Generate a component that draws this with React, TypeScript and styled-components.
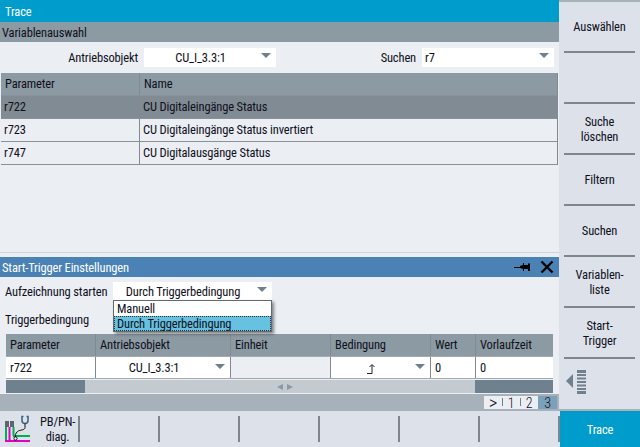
import styled, { createGlobalStyle } from 'styled-components';

const Global = createGlobalStyle`
  html, body { margin: 0; padding: 0; background: #ebeef3; }
  * { box-sizing: border-box; }
`;

const softkeysRight = ['Auswählen', '', 'Suche\nlöschen', 'Filtern', 'Suchen', 'Variablen-\nliste', 'Start-\nTrigger'];
const softkeysBottom = ['PB/PN-\ndiag.', '', '', '', '', '', ''];
const params = [
  { id: 'r722', name: 'CU Digitaleingänge Status', selected: true },
  { id: 'r723', name: 'CU Digitaleingänge Status invertiert', selected: false },
  { id: 'r747', name: 'CU Digitalausgänge Status', selected: false },
];

function DiagIcon() {
  return (
    <svg width='27' height='28' viewBox='0 0 27 28' fill='none' style={{ flex: 'none' }}>
      <rect x='1' y='6' width='4' height='6' fill='#5c666c' />
      <rect x='6' y='6' width='4' height='6' fill='#5c666c' />
      <path d='M2 12v14M9.500 12v9' stroke='#00b050' strokeWidth='2' />
      <path d='M5.500 12v14' stroke='#e000c8' strokeWidth='2' />
      <path d='M9 21h17' stroke='#00b050' strokeWidth='2' />
      <path d='M1 26h25' stroke='#e000c8' strokeWidth='2' />
      <path d='M19.500 1.500H18v4a3 3 0 0 0 6 0v-4h-1.500' stroke='#3f6484' strokeWidth='1.600' />
      <path d='M21 8.500v4c0 3-5 2-7.500 4s-2 4-2 6' stroke='#111' strokeWidth='1' />
      <circle cx='11.500' cy='23.500' r='1.600' stroke='#111' fill='#fff' />
    </svg>
  );
}

function PinIcon() {
  return (
    <svg width='17' height='11' viewBox='0 0 17 11'>
      <path d='M0 5h6V4l3 -1V1h1v2h4V1.5h2V9h-2V7h-4v2H9V7L6 6H0z' fill='#000' />
    </svg>
  );
}

function CloseIcon() {
  return (
    <svg width='14' height='14' viewBox='0 0 14 14'>
      <path d='M1.500 1.500l11 11M12.500 1.500l-11 11' stroke='#000' strokeWidth='2.400' />
    </svg>
  );
}

function EdgeIcon() {
  return (
    <svg width='9' height='10' viewBox='0 0 9 10' style={{ verticalAlign: 'middle' }}>
      <path d='M0 9.500h5V1M2.500 3L5 .5 7.500 3' stroke='#222' strokeWidth='1' fill='none' />
    </svg>
  );
}

export default function App() {
  return (
    <Screen>
      <Global />
      <Main>
        <TitleBar>Trace</TitleBar>
        <SectionBar>Variablenauswahl</SectionBar>
        <FilterRow>
          <FilterLabel $width={138}>Antriebsobjekt</FilterLabel>
          <Select $width={132} $center>
            CU_I_3.3:1
            <Caret />
          </Select>
          <FilterLabel $width={140}>Suchen</FilterLabel>
          <Select $width={132}>
            r7
            <Caret />
          </Select>
        </FilterRow>
        <ParamTable>
          <ParamRow $head>
            <ParamCell $width={139}>Parameter</ParamCell>
            <ParamCell $grow>Name</ParamCell>
          </ParamRow>
          {params.map((p) => (
            <ParamRow key={p.id} $selected={p.selected}>
              <ParamCell $width={139} $body>{p.id}</ParamCell>
              <ParamCell $grow $body>{p.name}</ParamCell>
            </ParamRow>
          ))}
        </ParamTable>
        <Blank />
        <DialogBar>
          Start-Trigger Einstellungen
          <DialogIcons>
            <PinIcon />
            <CloseIcon />
          </DialogIcons>
        </DialogBar>
        <Dialog>
          <StartRow>
            <StartLabel>Aufzeichnung starten</StartLabel>
            <Select $width={159} $center>
              Durch Triggerbedingung
              <Caret />
            </Select>
            <Popup>
              <PopupItem>Manuell</PopupItem>
              <PopupItem $active>Durch Triggerbedingung</PopupItem>
            </Popup>
          </StartRow>
          <TriggerLabel>Triggerbedingung</TriggerLabel>
          <TriggerTable>
            <TriggerRow $head>
              <TriggerCell $col={0}>Parameter</TriggerCell>
              <TriggerCell $col={1}>Antriebsobjekt</TriggerCell>
              <TriggerCell $col={2}>Einheit</TriggerCell>
              <TriggerCell $col={3}>Bedingung</TriggerCell>
              <TriggerCell $col={4}>Wert</TriggerCell>
              <TriggerCell $col={5}>Vorlaufzeit</TriggerCell>
            </TriggerRow>
            <TriggerRow>
              <TriggerCell $col={0}>r722</TriggerCell>
              <TriggerCell $col={1} $center>
                CU_I_3.3:1
                <Caret />
              </TriggerCell>
              <TriggerCell $col={2} $empty />
              <TriggerCell $col={3} $center>
                <EdgeIcon />
                <Caret />
              </TriggerCell>
              <TriggerCell $col={4}>0</TriggerCell>
              <TriggerCell $col={5}>0</TriggerCell>
            </TriggerRow>
            <ScrollBar>
              <ScrollThumb $width={79} />
              <ScrollArrows>
                <ScrollArrow $left />
                <ScrollArrow />
              </ScrollArrows>
              <ScrollThumb $width={78} />
            </ScrollBar>
          </TriggerTable>
        </Dialog>
        <PagerBar>
          <Pager>
            <PageItem $arrow>&gt;</PageItem>
            <PageItem $divided>1</PageItem>
            <PageItem $divided>2</PageItem>
            <PageItem $active>3</PageItem>
          </Pager>
        </PagerBar>
      </Main>
      <RightKeys>
        {softkeysRight.map((label, i) => (
          <RightKey key={i}>{label}</RightKey>
        ))}
        <RightKey>
          <MoreIcon>
            <svg width='21' height='24' viewBox='0 0 21 24' fill='#6f808e'>
              <path d='M7 4v14L0 11z' />
              <rect x='11' y='0' width='9' height='3' />
              <rect x='11' y='4' width='9' height='2' />
              <rect x='11' y='7.500' width='9' height='2' />
              <rect x='11' y='11' width='9' height='2' />
              <rect x='11' y='14.500' width='9' height='2' />
              <rect x='11' y='18' width='9' height='2' />
              <rect x='11' y='21' width='9' height='3' />
            </svg>
          </MoreIcon>
        </RightKey>
      </RightKeys>
      <BottomKeys>
        {softkeysBottom.map((label, i) => (
          <BottomKey key={i}>
            {i === 0 && <DiagIcon />}
            {label && <BottomLabel>{label}</BottomLabel>}
          </BottomKey>
        ))}
      </BottomKeys>
      <ActiveKey>Trace</ActiveKey>
    </Screen>
  );
}

const Screen = styled.div`
  width: 640px;
  height: 447px;
  display: grid;
  grid-template-columns: 560px 80px;
  grid-template-rows: 411px 36px;
  overflow: hidden;
  background: #ebeef3;
  color: #10101c;
  font-family: Roboto, sans-serif;
  font-size: 12.5px;
  font-stretch: 75%;
  letter-spacing: -0.15px;
`;
const Main = styled.div`
  display: flex;
  flex-direction: column;
  min-height: 0;
  width: 559px;
`;
const TitleBar = styled.div`
  height: 22px;
  background: #009ccc;
  color: #fff;
  line-height: 23px;
  padding-left: 5px;
  flex: none;
`;
const SectionBar = styled.div`
  height: 20px;
  background: #8c9aa3;
  line-height: 21px;
  padding-left: 2px;
  flex: none;
`;
const FilterRow = styled.div`
  height: 30px;
  flex: none;
  display: flex;
  align-items: center;
`;
const FilterLabel = styled.span<{ $width: number }>`
  flex: none;
  width: ${(p) => p.$width}px;
  margin-right: 6px;
  text-align: right;
`;
const Select = styled.div<{ $width: number; $center?: boolean }>`
  position: relative;
  flex: none;
  width: ${(p) => p.$width}px;
  height: 19px;
  background: #fff;
  line-height: 19px;
  padding: 0 ${(p) => (p.$center ? 22 : 3)}px 0 3px;
  text-align: ${(p) => (p.$center ? 'center' : 'left')};
`;
const Caret = styled.i`
  position: absolute;
  right: 5px;
  top: 50%;
  margin-top: -4px;
  width: 0;
  height: 0;
  border-left: 5px solid transparent;
  border-right: 5px solid transparent;
  border-top: 5px solid #6f808e;
`;
const ParamTable = styled.div`
  flex: none;
  margin: 1px 0 0 1px;
  width: 557px;
  border-right: 1px solid #7f8a92;
`;
const ParamRow = styled.div<{ $head?: boolean; $selected?: boolean }>`
  display: flex;
  height: 23px;
  line-height: 22px;
  border-bottom: 1px solid #8b9197;
  background: ${(p) => (p.$head ? '#8c9aa3' : p.$selected ? '#818b93' : '#ebeef3')};
`;
const ParamCell = styled.div<{ $width?: number; $grow?: boolean; $body?: boolean }>`
  width: ${(p) => (p.$width ? `${p.$width}px` : 'auto')};
  flex: ${(p) => (p.$grow ? 1 : 'none')};
  padding-left: ${(p) => (p.$body ? 3 : 4)}px;
  border-right: ${(p) => (p.$grow ? 'none' : '1px solid #7f8a92')};
`;
const Blank = styled.div`
  flex: 1;
  border-bottom: 1px solid #d0d5da;
  margin-bottom: 4px;
`;
const DialogBar = styled.div`
  height: 20px;
  flex: none;
  background: #4a82b5;
  color: #fff;
  line-height: 21px;
  padding: 0 5px 0 2px;
  display: flex;
  justify-content: space-between;
  align-items: center;
`;
const DialogIcons = styled.span`
  display: flex;
  align-items: center;
  gap: 9px;
`;
const Dialog = styled.div`
  flex: none;
  height: 117px;
  display: flex;
  flex-direction: column;
  padding: 5px 6px 0;
`;
const StartRow = styled.div`
  position: relative;
  display: flex;
  align-items: center;
  height: 18px;
  flex: none;
`;
const StartLabel = styled.span`
  flex: none;
  width: 107px;
  margin-left: -1px;
  margin-right: 1px;
`;
const Popup = styled.div`
  position: absolute;
  left: 107px;
  top: 18px;
  width: 159px;
  height: 32px;
  background: #fff;
  border: 1px solid #5f6a72;
  box-shadow: 2px 2px 3px rgba(0, 0, 0, 0.45);
  z-index: 2;
`;
const PopupItem = styled.div<{ $active?: boolean }>`
  height: 15px;
  line-height: 15px;
  padding-left: 3px;
  background: ${(p) => (p.$active ? '#67c1e0' : 'transparent')};
  outline: ${(p) => (p.$active ? '1px dotted #333' : 'none')};
  outline-offset: -1px;
`;
const TriggerLabel = styled.div`
  margin: 11px 0 0 -1px;
  height: 18px;
  line-height: 18px;
  flex: none;
`;
const TriggerTable = styled.div`
  width: 547px;
  margin-top: 5px;
  flex: none;
`;
const colWidths = [90, 135, 100, 100, 45, 77];
const TriggerRow = styled.div<{ $head?: boolean }>`
  display: flex;
  height: ${(p) => (p.$head ? 23 : 22)}px;
  line-height: 22px;
  background: ${(p) => (p.$head ? '#8c9aa3' : '#fff')};
  border-bottom: 1px solid #a3a9ad;
`;
const TriggerCell = styled.div<{ $col: number; $center?: boolean; $empty?: boolean }>`
  position: relative;
  flex: none;
  width: ${(p) => colWidths[p.$col]}px;
  padding: 0 ${(p) => (p.$center ? 22 : 3)}px 0 4px;
  text-align: ${(p) => (p.$center ? 'center' : 'left')};
  background: ${(p) => (p.$empty ? '#ebeef3' : 'transparent')};
  border-right: ${(p) => (p.$col === 5 ? 'none' : '1px solid #7f8a92')};
`;
const ScrollBar = styled.div`
  height: 13px;
  margin-top: 1px;
  background: #c3cad0;
  display: flex;
  justify-content: space-between;
  align-items: center;
`;
const ScrollThumb = styled.div<{ $width: number }>`
  width: ${(p) => p.$width}px;
  height: 100%;
  background: #6f808e;
`;
const ScrollArrows = styled.div`
  display: flex;
  gap: 4px;
  margin-left: 10px;
`;
const ScrollArrow = styled.i<{ $left?: boolean }>`
  width: 0;
  height: 0;
  border-top: 3.5px solid transparent;
  border-bottom: 3.5px solid transparent;
  ${(p) => (p.$left ? 'border-right: 6px solid #8a99a5;' : 'border-left: 6px solid #8a99a5;')}
`;
const PagerBar = styled.div`
  flex: none;
  height: 17px;
  background: #a6b1b9;
  display: flex;
  justify-content: flex-end;
  align-items: flex-start;
  padding: 2px 2px 0 0;
`;
const Pager = styled.div`
  display: flex;
  background: #ebeef3;
  height: 13px;
  font-size: 14px;
  font-weight: 300;
`;
const PageItem = styled.span<{ $divided?: boolean; $active?: boolean; $arrow?: boolean }>`
  width: ${(p) => (p.$active ? 19 : 18)}px;
  line-height: ${(p) => (p.$arrow ? 13 : 14)}px;
  font-size: ${(p) => (p.$arrow ? 19 : 14)}px;
  text-align: center;
  background: ${(p) => (p.$active ? '#7ba0ba' : 'transparent')};
  position: relative;
  ${(p) =>
    p.$divided &&
    `&::before { content: ''; position: absolute; left: 0; top: 2px; height: 8px; width: 1px; background: #6f808e; }`}
`;
const RightKeys = styled.div`
  grid-row: 1;
  grid-column: 2;
  margin-left: -1px;
  background: #dde2ea;
  border-top: 2px solid #a6b1b9;
  border-bottom: 2px solid #a6b1b9;
  display: flex;
  flex-direction: column;
`;
const RightKey = styled.div`
  height: 51px;
  flex: none;
  margin: 0 5px;
  border-bottom: 2px solid #7f878d;
  display: flex;
  align-items: center;
  justify-content: center;
  text-align: center;
  white-space: pre-line;
  line-height: 15px;
  &:last-child {
    border-bottom: none;
    justify-content: flex-start;
  }
`;
const MoreIcon = styled.span`
  display: flex;
  margin: 0 0 5px 2px;
`;
const BottomKeys = styled.div`
  grid-row: 2;
  grid-column: 1;
  background: #dde2ea;
  display: flex;
`;
const BottomKey = styled.div`
  width: 80px;
  height: 26px;
  margin-top: 5px;
  border-right: 2px solid #7f878d;
  display: flex;
  align-items: center;
  padding-left: 4px;
  gap: 9px;
`;
const BottomLabel = styled.span`
  white-space: pre-line;
  text-align: center;
  line-height: 15px;
`;
const ActiveKey = styled.div`
  grid-row: 2;
  grid-column: 2;
  background: #009ccc;
  color: #fff;
  display: flex;
  align-items: center;
  justify-content: center;
`;
